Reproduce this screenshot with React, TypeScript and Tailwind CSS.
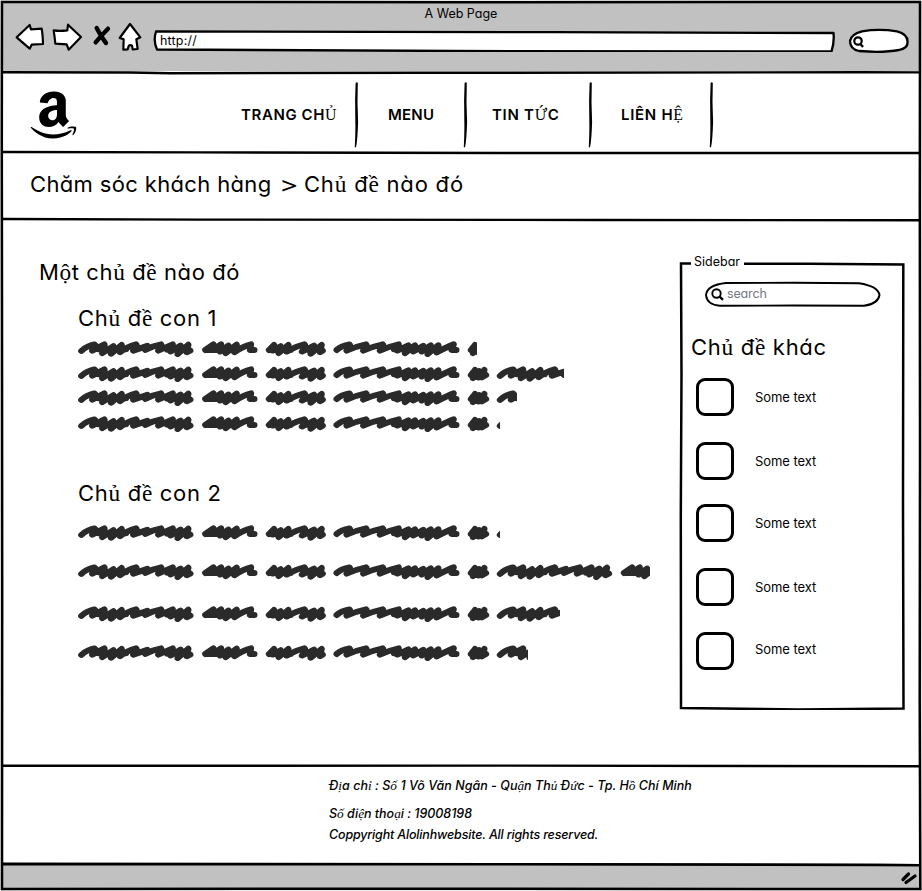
import React from "react";
import { FaAmazon } from "react-icons/fa6";

/** Vietnamese letters with stacked marks are set in a serif face. */
function T({ children }: { children: string }) {
  return (
    <>
      {children.split(/([\u1E00-\u1EFF])/).map((part, i) =>
        /^[\u1E00-\u1EFF]$/.test(part) ? (
          <span key={i} className="font-['Liberation_Serif',serif] text-[1.06em] leading-[0] font-normal">
            {part}
          </span>
        ) : (
          part
        )
      )}
    </>
  );
}

/** Hand-drawn horizontal rule. */
function Rule({ d }: { d: string }) {
  return (
    <svg className="block h-[4px] w-full shrink-0 overflow-visible" viewBox="0 0 922 4" fill="none" stroke="#000" strokeWidth="2.4">
      <path d={d} />
    </svg>
  );
}

function NavDivider() {
  return (
    <svg className="h-[66px] w-[5px] shrink-0" viewBox="0 0 5 66">
      <path d="M1.600 1 Q3 -.5 3.800 1 L3.500 20 L4.100 40 Q3.600 58 2 65.500 L.8 65 Q1.600 50 1.300 38 L1.100 18 Z" fill="#000" />
    </svg>
  );
}

const SCRIBBLES = [
  "M34 153Q48 138 73 132Q80 136 67 152Q84 142 103 132Q106 138 97 160L130 138L123 162L155 134L150 157Q170 140 198 132Q204 138 190 152L232 137L226 150Q250 136 273 132Q278 138 265 152L308 132L302 155L332 136L323 163L355 133L350 157L361 152M85 148H168M292 149H355",
  "M406 150L430 132L428 150L453 132L450 155L475 136L467 160L500 133L493 157Q520 138 543 132L540 150L553 150M412 150H500",
  "M597 150L612 134L608 152L632 138L626 160L655 134L650 155Q680 138 703 132Q710 138 696 155L732 136L722 162L755 134L750 157L758 152M604 150H662M704 149H752",
  "M800 150Q815 136 838 132Q845 138 830 152Q860 138 888 132Q894 138 880 152Q910 138 938 132Q944 138 930 152Q960 138 986 132L982 152L1015 135L1005 160L1035 135L1030 155L1060 137L1055 155L1082 135L1073 163L1105 135L1100 158Q1130 140 1151 132L1145 150L1159 150M972 148H1110",
  "M1203 150L1215 134L1209 160L1228 138L1225 158L1243 134L1235 158L1248 150M1206 150H1244",
];

function ScribbleLine({ className, width }: { className: string; width: number }) {
  return (
    <svg
      className={"block h-[16px] " + className}
      viewBox={`0 0 ${width} 16`}
      fill="none"
      stroke="#2a2a2a"
      strokeWidth="19"
      strokeLinecap="round"
      strokeLinejoin="round"
    >
      <g transform="scale(.33333) translate(-24 -114) scale(1 .94)">
        {SCRIBBLES.map((d) => (
          <path key={d} d={d} />
        ))}
        <g transform="translate(1256 0)">
          <path d={SCRIBBLES[0]} />
          <path d={SCRIBBLES[1]} />
        </g>
      </g>
    </svg>
  );
}

function SidebarItem({ className, labelClassName = "", label }: { className: string; labelClassName?: string; label: string }) {
  return (
    <li className={"flex h-[38px] items-center " + className}>
      <span className="h-[38px] w-[38px] rounded-[9px] border-[3px] border-black bg-white" />
      <span className={"ml-[21px] text-[13px] leading-none tracking-[-.05px] " + labelClassName}>{label}</span>
    </li>
  );
}

function BrowserBar() {
  return (
    <header className="h-[71px] shrink-0 bg-[#c1c1c1]">
      <div className="flex h-[20px] items-end justify-center text-[12.500px] leading-[13px]">
        <span>A Web Page</span>
      </div>
      <div className="flex h-[40px] pl-[14px]">
        <svg className="h-[34px] w-[130px] shrink-0" viewBox="42 60 390 102" fill="#fff" stroke="#000" strokeWidth="6.500" strokeLinejoin="round" strokeLinecap="round">
          <path d="M50 112L89 75L93 88L125 86Q128 100 129 132L95 134L89 146Z" />
          <path d="M161 91Q180 94 202 91L204 74L243 111L206 149L200 133L166 131Q164 110 161 91Z" />
          <path d="M390 72L421 112L409 118L413 147L398 148L396 137Q390 133 386 138L383 148L370 149L371 118L359 114Z" />
          <path d="M290 84Q304 112 318 129M324 86Q304 106 287 127" strokeWidth="13" />
        </svg>
        <div className="relative ml-[9px] mt-[10px] flex h-[22px] w-[682px] items-center pl-[7px]">
          <svg className="absolute inset-0 h-full w-full" viewBox="0 0 682 22" fill="#fff" stroke="#000" strokeWidth="2.300" strokeLinejoin="round">
            <path d="M3 1.500L220 1.800L400 2.200L680.500 3Q681.500 12 678.500 21.500L300 21L4 19.500Q0 11 3 1.500Z" />
          </svg>
          <span className="relative text-[12.500px] leading-none tracking-[.2px]">http://</span>
        </div>
        <svg className="ml-[12px] mt-[7px] h-[26px] w-[64px] shrink-0" viewBox="0 0 64 26" fill="#fff" stroke="#000" strokeWidth="2.300">
          <path d="M12 24Q3 22 3 14Q4 7 15 4.300Q32 1.500 50 4.300Q61 7 60.500 15Q61 21 52 23Q36 26 12 24Z" />
          <circle cx="11" cy="14" r="3.700" strokeWidth="2.200" />
          <path d="M13 16.500L16 20" />
        </svg>
      </div>
    </header>
  );
}

export default function App() {
  return (
    <div className="relative flex h-[891px] w-[922px] flex-col overflow-hidden bg-white font-[Inter,'Open_Sans',sans-serif] text-black [font-feature-settings:'cv11']">
      <BrowserBar />
      <Rule d="M2 1.300L130 1.500L170 2.200L420 1.800L860 1.300L920 1.400" />

      <nav className="flex h-[76px] shrink-0 items-center pt-[3px] text-[15px] font-semibold leading-none">
        <FaAmazon className="ml-[30px] h-[54px] w-[47px] shrink-0" />
        <span className="ml-[164px] w-[113px] tracking-[.6px]"><T>TRANG CHỦ</T></span>
        <NavDivider />
        <span className="ml-[29px] w-[75px] tracking-[.2px]"><T>MENU</T></span>
        <NavDivider />
        <span className="ml-[24px] w-[96px] tracking-[.7px]"><T>TIN TỨC</T></span>
        <NavDivider />
        <span className="ml-[28px] w-[88px] tracking-[.7px]"><T>LIÊN HỆ</T></span>
        <NavDivider />
      </nav>
      <Rule d="M2 1L200 1.400L500 2L920 2" />

      <div className="flex h-[63px] shrink-0 items-center pb-[5px] pl-[30px] text-[22px] leading-none">
        <span className="w-[249px] tracking-[.35px]"><T>Chăm sóc khách hàng</T></span>
        <span className="w-[25px] origin-left scale-x-[1.350]">{">"}</span>
        <span className="tracking-[.8px]"><T>Chủ đề nào đó</T></span>
      </div>
      <Rule d="M2 1L200 1.600L600 2L920 2.200" />

      <main className="flex h-[542px] shrink-0">
        <section className="w-[679px] pl-[39px] pt-[37px]">
          <h1 className="text-[22px] leading-[26px] tracking-[.6px]"><T>Một chủ đề nào đó</T></h1>
          <div className="pl-[39px] pt-[20px]">
            <h2 className="text-[22px] leading-[26px] tracking-[.7px]"><T>Chủ đề con 1</T></h2>
            <ScribbleLine className="mt-[10px] w-[399px]" width={399} />
            <ScribbleLine className="mt-[9px] w-[486px]" width={486} />
            <ScribbleLine className="mt-[8px] w-[439px]" width={439} />
            <ScribbleLine className="mt-[10px] w-[422px]" width={422} />
            <h2 className="mt-[48px] text-[22px] leading-[26px] tracking-[.7px]"><T>Chủ đề con 2</T></h2>
            <ScribbleLine className="mt-[19px] w-[422px]" width={422} />
            <ScribbleLine className="mt-[23px] w-[572px]" width={572} />
            <ScribbleLine className="mt-[26px] w-[482px]" width={482} />
            <ScribbleLine className="mt-[23px] w-[450px]" width={450} />
          </div>
        </section>

        <aside className="relative mt-[32px] h-[456px] w-[226px]">
          <svg className="absolute inset-0 h-full w-full" viewBox="0 0 226 456" fill="none" stroke="#000" strokeWidth="2.500">
            <path d="M12 9.500L2 9.500L2.500 120L1.800 260L2 454L120 455.500L224.500 454.500L224 250L224.300 10.500L130 9.800L65 9.700" />
          </svg>
          <div className="relative pl-[15px] text-[12.500px] leading-[15px] tracking-[0px]">Sidebar</div>
          <div className="relative ml-[25px] mt-[12px] flex h-[27px] w-[177px] items-center pl-[23px]">
            <svg className="absolute inset-0 h-full w-full" viewBox="0 0 177 27" fill="none" stroke="#000" strokeWidth="1.900">
              <path d="M22 2L90 1.800L155 2.200Q174 5 175.500 14Q174 23 160 24.800L90 24.500L16 24.800Q3 24 2 14Q3 4 22 2Z" />
              <circle cx="12.500" cy="12.500" r="4.200" />
              <path d="M15.500 15.500L19 18.800" strokeWidth="2.400" />
            </svg>
            <span className="relative text-[12.500px] leading-none tracking-[-.15px] text-[#777782]">search</span>
          </div>
          <h2 className="relative mt-[26px] pl-[12px] text-[22px] leading-[26px] tracking-[.7px]"><T>Chủ đề khác</T></h2>
          <ul className="relative pl-[17px] pt-[18px]">
            <SidebarItem className="" label="Some text" />
            <SidebarItem className="mt-[26px]" label="Some text" />
            <SidebarItem className="mt-[24px]" label="Some text" />
            <SidebarItem className="mt-[26px]" label="Some text" />
            <SidebarItem className="mt-[26px]" labelClassName="pb-[4px]" label="Some text" />
          </ul>
        </aside>
      </main>
      <Rule d="M2 1.800L500 1.600L920 2.200" />

      <footer className="h-[95px] shrink-0 pl-[329px] pt-[8px] text-[12.500px] font-medium italic leading-[20px]">
        <p className="tracking-[.03px]"><T>Địa chỉ : Số 1 Võ Văn Ngân - Quận Thủ Đức - Tp. Hồ Chí Minh</T></p>
        <p className="mt-[8px] tracking-[-.03px]"><T>Số điện thoại : 19008198</T></p>
        <p className="mt-[1px] tracking-[-.17px]">Coppyright Alolinhwebsite. All rights reserved.</p>
      </footer>
      <Rule d="M2 .7L500 1.200L880 2L920 2.200" />

      <div className="-mt-[3px] flex flex-1 items-center justify-end bg-[#c1c1c1] pr-[4px]">
        <svg className="h-[16px] w-[18px]" viewBox="0 0 18 16" stroke="#000" strokeWidth="3.200" strokeLinecap="round">
          <path d="M3 9.500L8.500 4M6 12.500L15 6" />
        </svg>
      </div>

      {/* hand-drawn window outline */}
      <svg className="pointer-events-none absolute inset-0 h-full w-full" viewBox="0 0 922 891" fill="none">
        <path d="M0 0H922V891H0ZM2 2V889H920V2Z" fill="#e8e8e8" fillRule="evenodd" />
        <path d="M2 864.200L500 864.200L880 865L920 865.200" stroke="#000" strokeWidth="2.500" />
        <path d="M2 2L460 2.200L920 2L919.800 200L920 450L919.700 700L920.300 889L400 888.800L2 889L2.200 600L2 300L1.800 140Z" stroke="#000" strokeWidth="2.500" />
      </svg>
    </div>
  );
}
